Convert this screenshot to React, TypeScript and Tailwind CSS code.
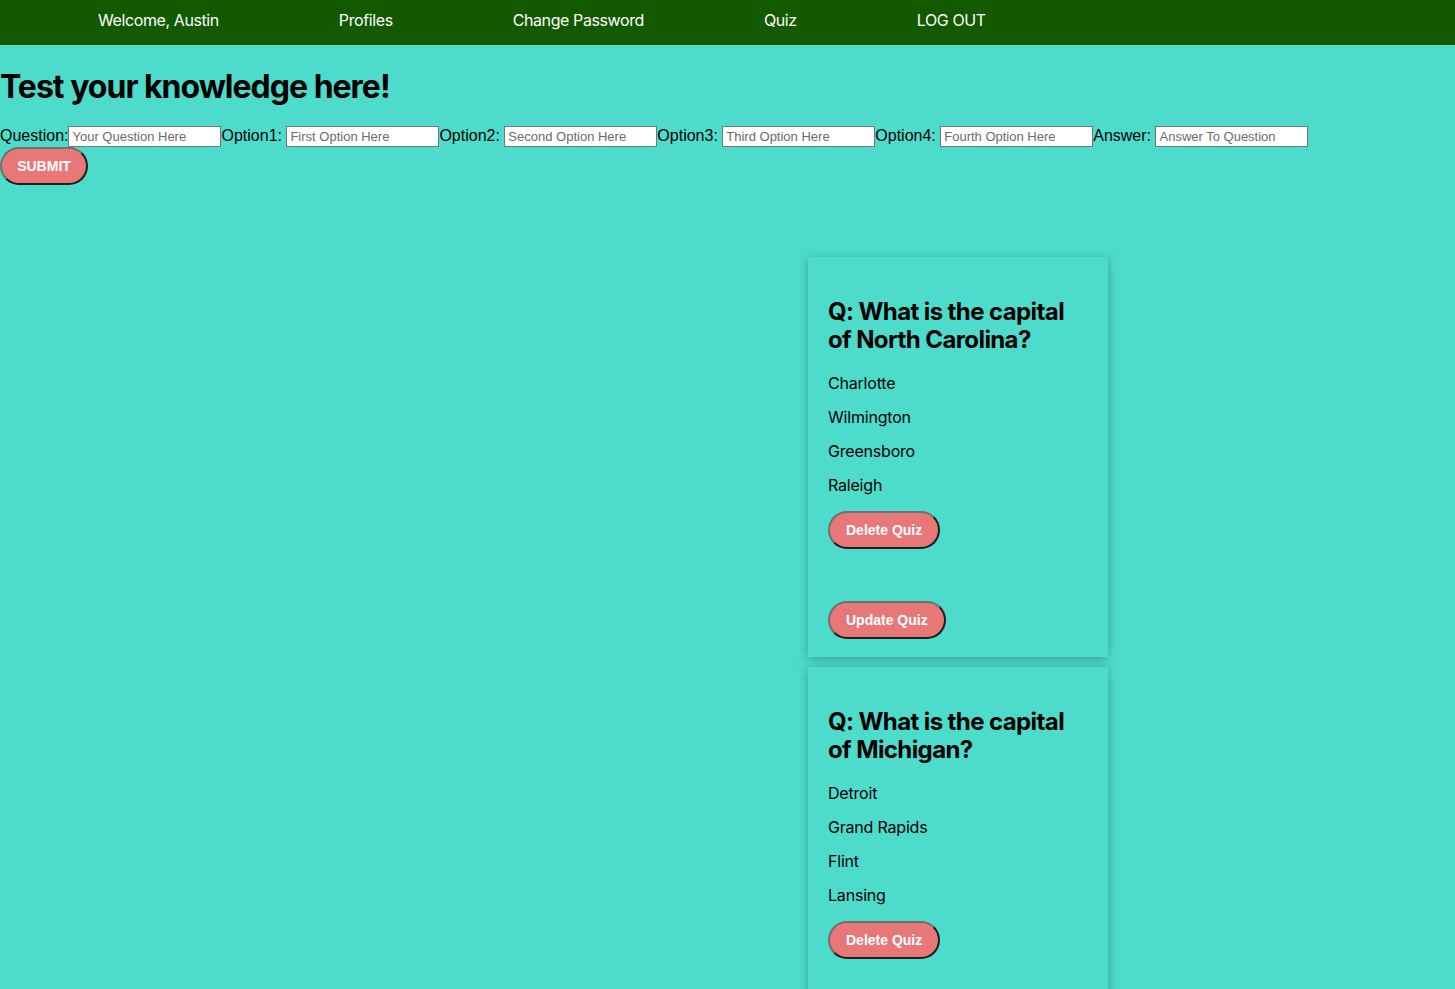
const navItems = ["Welcome, Austin", "Profiles", "Change Password", "Quiz", "LOG OUT"];

const fields = [
  { label: "Question:", placeholder: "Your Question Here" },
  { label: "Option1: ", placeholder: "First Option Here" },
  { label: "Option2: ", placeholder: "Second Option Here" },
  { label: "Option3: ", placeholder: "Third Option Here" },
  { label: "Option4: ", placeholder: "Fourth Option Here" },
  { label: "Answer: ", placeholder: "Answer To Question" },
];

const quizzes = [
  {
    question: "Q: What is the capital of North Carolina?",
    options: ["Charlotte", "Wilmington", "Greensboro", "Raleigh"],
  },
  {
    question: "Q: What is the capital of Michigan?",
    options: ["Detroit", "Grand Rapids", "Flint", "Lansing"],
  },
];

const PillButton = ({ children }: { children: React.ReactNode }) => (
  <button className="h-[38px] px-[16px] rounded-full bg-[#e87878] text-white text-[14px] font-bold font-['Liberation_Sans',Arial,sans-serif] border-2 border-t-[#6f6f6f] border-l-[#6f6f6f] border-b-[#1e1e1e] border-r-[#1e1e1e]">
    {children}
  </button>
);

const QuizCard = ({ question, options, last }: { question: string; options: string[]; last?: boolean }) => (
  <div className="w-[300px] bg-[#4ddccb] px-5 pt-[41px] pb-[18px] shadow-[0_2px_10px_rgba(0,0,0,0.28)]">
    <h2 className="text-[24px] leading-[28px] font-bold tracking-[-0.6px] text-black">{question}</h2>
    <div className="mt-[17px] flex flex-col gap-[10px]">
      {options.map((o) => (
        <p key={o} className="text-[16px] leading-[24px] tracking-[-0.2px] text-black">
          {o}
        </p>
      ))}
    </div>
    <div className="mt-[14px]">
      <PillButton>Delete Quiz</PillButton>
    </div>
    {!last && (
      <div className="mt-[52px]">
        <PillButton>Update Quiz</PillButton>
      </div>
    )}
    {last && <div className="h-[40px]" />}
  </div>
);

export default function App() {
  return (
    <div className="min-h-screen bg-[#4ddccb] font-['Inter','Noto_Sans',sans-serif] text-black overflow-hidden">
      <nav className="h-[45px] bg-[#125900] flex items-start pt-[8px] pl-[38px]">
        {navItems.map((item) => (
          <a key={item} className="px-[60px] text-white text-[16px] leading-[24px] tracking-[-0.4px] cursor-pointer">
            {item}
          </a>
        ))}
      </nav>

      <h1 className="mt-[23px] text-[32px] leading-[37px] font-bold tracking-[-1px]">Test your knowledge here!</h1>

      <form className="mt-[20px] font-['Liberation_Sans',Arial,sans-serif]">
        <div className="flex items-center h-[22px] text-[16px] whitespace-pre">
          {fields.map((f) => (
            <label key={f.label} className="flex items-center">
              <span>{f.label}</span>
              <input
                placeholder={f.placeholder}
                className="w-[153px] h-[21px] bg-white border border-[#767676] px-[3px] text-[13px] placeholder:text-[#6b6b6b] outline-none"
              />
            </label>
          ))}
        </div>
        <button className="block h-[38px] w-[88px] rounded-full bg-[#e87878] text-white text-[14px] font-bold border-2 border-t-[#6f6f6f] border-l-[#6f6f6f] border-b-[#1e1e1e] border-r-[#1e1e1e]">
          SUBMIT
        </button>
      </form>

      <div className="mt-[72px] ml-[808px] flex flex-col gap-[10px]">
        {quizzes.map((q, i) => (
          <QuizCard key={q.question} question={q.question} options={q.options} last={i === quizzes.length - 1} />
        ))}
      </div>
    </div>
  );
}
